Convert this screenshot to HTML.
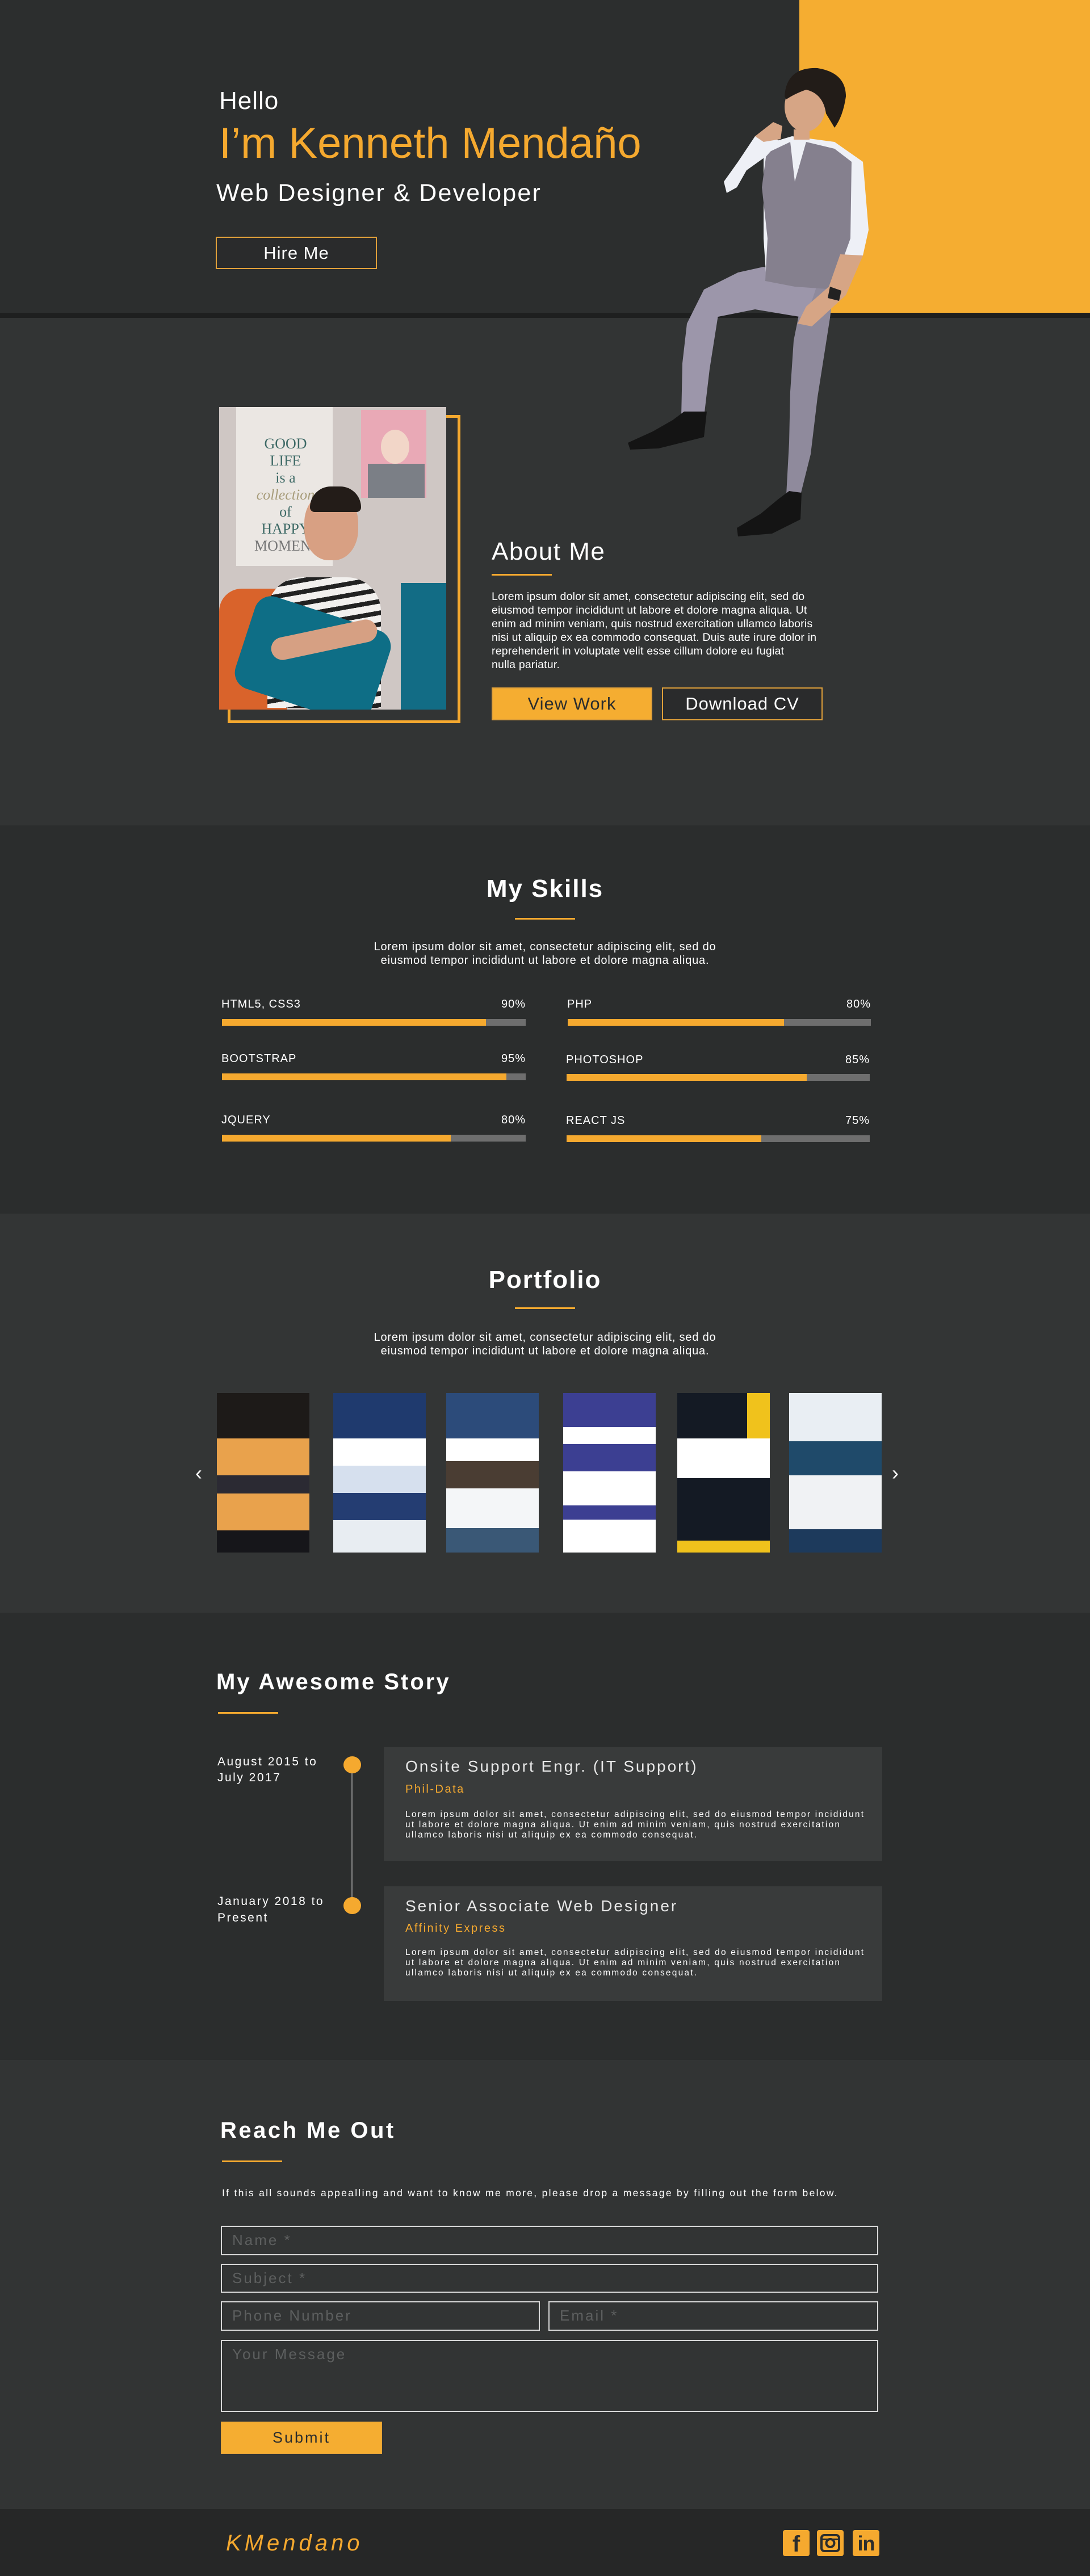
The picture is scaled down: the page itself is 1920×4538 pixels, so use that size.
<!DOCTYPE html>
<html><head><meta charset="utf-8"><style>
*{margin:0;padding:0;box-sizing:border-box}
body{width:1920px;height:4538px;position:relative;font-family:"Liberation Sans",Arial,sans-serif;color:#fff;background:#2b2d2d;overflow:hidden}
.a{position:absolute;white-space:nowrap}
.sec{position:absolute;left:0;width:1920px}
.ul{position:absolute;height:3px;background:#f5a92f}
.lbl{position:absolute;font-size:20px;letter-spacing:1px;line-height:24px}
.bar{position:absolute;height:12px;background:#6e6e6e}
.bar i{display:block;height:100%;background:#f5a92f}
.th{position:absolute;top:2454px;width:163px;height:281px;overflow:hidden;background:#fff}
.th div{width:100%}
.inp{position:absolute;border:2px solid #d8d8d8;color:#5d5f5f;font-size:26px;letter-spacing:3px;padding:6px 18px;line-height:34px}
.card{position:absolute;left:676px;width:878px;background:#393b3b}
.card .t{position:absolute;left:38px;font-size:28px;letter-spacing:3px;color:#e8e8e8}
.card .c{position:absolute;left:38px;font-size:20px;letter-spacing:2.5px;color:#f5a92f}
.card .p{position:absolute;left:38px;font-size:15.5px;line-height:18px;letter-spacing:2.2px;color:#fff}
.ic{position:absolute;top:4457px;width:47px;height:46px;background:#f5a92f;border-radius:4px;color:#2b2d2d;font-weight:bold;text-align:center}
</style></head><body>
<div class="sec" style="top:0;height:551px;background:#2c2e2e"></div>
<div class="a" style="left:1408px;top:0;width:512px;height:551px;background:#f5ad31"></div>
<div class="sec" style="top:551px;height:9px;background:#1e1f1f"></div>
<div class="sec" style="top:560px;height:894px;background:#323434"></div>
<div class="sec" style="top:1454px;height:684px;background:#2b2d2d"></div>
<div class="sec" style="top:2138px;height:703px;background:#333535"></div>
<div class="sec" style="top:2841px;height:788px;background:#2b2d2d"></div>
<div class="sec" style="top:3629px;height:791px;background:#323434"></div>
<div class="sec" style="top:4420px;height:118px;background:#262727"></div>

<div class="a" style="left:386px;top:153px;font-size:44px;line-height:50px;letter-spacing:1px">Hello</div>
<div class="a" style="left:386px;top:210px;font-size:76px;line-height:86px;color:#f5a92f">I’m Kenneth Mendaño</div>
<div class="a" style="left:381px;top:315px;font-size:43px;line-height:50px;letter-spacing:2.2px">Web Designer &amp; Developer</div>
<div class="a" style="left:380px;top:417px;width:284px;height:57px;border:2px solid #e0a03a;background:#2a2b2c;font-size:31px;line-height:53px;text-align:center;letter-spacing:1px">Hire Me</div>

<svg class="a" style="left:0;top:0" width="1920" height="1000" viewBox="0 0 1920 1000">
<polygon points="1420,490 1470,495 1462,560 1440,700 1428,800 1410,872 1385,872 1390,780 1392,690 1398,600" fill="#8f8a9c"/>
<polygon points="1345,470 1440,500 1420,560 1330,545 1255,560 1225,540 1240,510 1300,480" fill="#9c96aa"/>
<polygon points="1225,540 1265,555 1250,650 1240,735 1200,735 1202,640 1210,570" fill="#9c96aa"/>
<polygon points="1205,725 1245,725 1240,770 1160,790 1110,792 1106,780 1150,760 1185,740" fill="#141414"/>
<polygon points="1390,865 1412,868 1410,915 1360,940 1300,945 1298,930 1340,905 1370,880" fill="#141414"/>
<polygon points="1345,255 1395,240 1470,250 1520,285 1530,405 1520,450 1470,455 1460,500 1350,495 1345,420" fill="#eef0f6"/>
<polygon points="1350,270 1392,250 1400,320 1420,250 1470,262 1500,285 1498,420 1480,470 1470,510 1400,505 1348,495 1352,420 1342,330" fill="#85808e"/>
<polygon points="1350,275 1315,300 1298,330 1280,340 1275,320 1300,285 1330,240 1360,232 1372,250" fill="#eef0f6"/>
<polygon points="1330,240 1362,215 1378,222 1375,245 1345,250" fill="#d6a585"/>
<polygon points="1480,448 1520,450 1490,520 1430,575 1405,570 1420,540 1460,505" fill="#d6a585"/>
<polygon points="1462,505 1482,512 1478,530 1458,525" fill="#222"/>
<ellipse cx="1418" cy="188" rx="36" ry="44" fill="#d6a585"/>
<path d="M1382,170 Q1385,118 1440,120 Q1490,128 1490,170 Q1485,205 1470,225 L1455,200 Q1450,165 1420,158 Q1400,165 1385,175 Z" fill="#221c18"/>
<rect x="1398" y="228" width="28" height="18" fill="#d6a585"/>
</svg>

<div class="a" style="left:401px;top:731px;width:410px;height:543px;border:5px solid #f5a92f"></div>
<div class="a" style="left:386px;top:717px;width:400px;height:533px;overflow:hidden;background:#cfc7c4">
  <div class="a" style="left:30px;top:0;width:170px;height:280px;background:#ebe7e3"></div>
  <div class="a" style="left:62px;top:50px;font-size:26px;color:#3e6a66;font-family:'Liberation Serif',serif;line-height:30px;text-align:center;white-space:normal;width:110px">GOOD LIFE<br>is a<br><span style="color:#a79c7a;font-style:italic">collection</span><br>of<br>HAPPY<br><span style="color:#777">MOMENTS</span></div>
  <div class="a" style="left:250px;top:5px;width:115px;height:155px;background:#e9a9b6"></div>
  <div class="a" style="left:285px;top:40px;width:50px;height:60px;border-radius:50%;background:#f2d6c8"></div>
  <div class="a" style="left:262px;top:100px;width:100px;height:60px;background:#7b7f86"></div>
  <div class="a" style="left:0;top:320px;width:120px;height:213px;background:#d9632b;border-radius:40px 0 0 0"></div>
  <div class="a" style="left:85px;top:300px;width:200px;height:230px;border-radius:60px 60px 0 0;background-image:repeating-linear-gradient(170deg,#f2f0ee 0 12px,#222 12px 20px)"></div>
  <div class="a" style="left:150px;top:150px;width:95px;height:120px;border-radius:45%;background:#d8a083"></div>
  <div class="a" style="left:160px;top:140px;width:90px;height:45px;border-radius:45px 45px 10px 10px;background:#231c18"></div>
  <div class="a" style="left:40px;top:360px;width:250px;height:170px;background:#0e6e86;transform:rotate(18deg);border-radius:30px"></div>
  <div class="a" style="left:320px;top:310px;width:80px;height:223px;background:#126c85"></div>
  <div class="a" style="left:90px;top:390px;width:190px;height:40px;background:#d6a083;border-radius:20px;transform:rotate(-12deg)"></div>
</div>

<div class="a" style="left:866px;top:946px;font-size:44px;line-height:52px;letter-spacing:1.5px">About Me</div>
<div class="ul" style="left:866px;top:1011px;width:106px"></div>
<div class="a" style="left:866px;top:1039px;font-size:19.5px;line-height:24px;letter-spacing:0.2px">Lorem ipsum dolor sit amet, consectetur adipiscing elit, sed do<br>eiusmod tempor incididunt ut labore et dolore magna aliqua. Ut<br>enim ad minim veniam, quis nostrud exercitation ullamco laboris<br>nisi ut aliquip ex ea commodo consequat. Duis aute irure dolor in<br>reprehenderit in voluptate velit esse cillum dolore eu fugiat<br>nulla pariatur.</div>
<div class="a" style="left:866px;top:1211px;width:283px;height:58px;background:#f5ad31;border:2px solid #e0a03a;color:#2b2d2d;font-size:31px;line-height:54px;text-align:center;letter-spacing:1px">View Work</div>
<div class="a" style="left:1166px;top:1211px;width:283px;height:58px;border:2px solid #e0a03a;background:#2a2b2c;font-size:31px;line-height:54px;text-align:center;letter-spacing:1px">Download CV</div>

<div class="a" style="left:0;width:1920px;text-align:center;top:1540px;font-size:44px;line-height:52px;letter-spacing:2px;font-weight:bold">My Skills</div>
<div class="ul" style="left:907px;top:1617px;width:106px"></div>
<div class="a" style="left:0;width:1920px;text-align:center;top:1656px;font-size:20px;line-height:24px;letter-spacing:0.8px">Lorem ipsum dolor sit amet, consectetur adipiscing elit, sed do<br>eiusmod tempor incididunt ut labore et dolore magna aliqua.</div>

<div class="lbl" style="left:390px;top:1757px">HTML5, CSS3</div><div class="lbl" style="left:870px;width:56px;text-align:right;top:1757px">90%</div>
<div class="bar" style="left:391px;top:1795px;width:535px"><i style="width:87%"></i></div>
<div class="lbl" style="left:999px;top:1757px">PHP</div><div class="lbl" style="left:1478px;width:56px;text-align:right;top:1757px">80%</div>
<div class="bar" style="left:1000px;top:1795px;width:534px"><i style="width:71.4%"></i></div>
<div class="lbl" style="left:390px;top:1853px">BOOTSTRAP</div><div class="lbl" style="left:870px;width:56px;text-align:right;top:1853px">95%</div>
<div class="bar" style="left:391px;top:1891px;width:535px"><i style="width:93.6%"></i></div>
<div class="lbl" style="left:997px;top:1855px">PHOTOSHOP</div><div class="lbl" style="left:1476px;width:56px;text-align:right;top:1855px">85%</div>
<div class="bar" style="left:998px;top:1892px;width:534px"><i style="width:79.3%"></i></div>
<div class="lbl" style="left:390px;top:1961px">JQUERY</div><div class="lbl" style="left:870px;width:56px;text-align:right;top:1961px">80%</div>
<div class="bar" style="left:391px;top:1999px;width:535px"><i style="width:75.4%"></i></div>
<div class="lbl" style="left:997px;top:1962px">REACT JS</div><div class="lbl" style="left:1476px;width:56px;text-align:right;top:1962px">75%</div>
<div class="bar" style="left:998px;top:2000px;width:534px"><i style="width:64.3%"></i></div>

<div class="a" style="left:0;width:1920px;text-align:center;top:2229px;font-size:44px;line-height:52px;letter-spacing:2px;font-weight:bold">Portfolio</div>
<div class="ul" style="left:907px;top:2303px;width:106px"></div>
<div class="a" style="left:0;width:1920px;text-align:center;top:2344px;font-size:20px;line-height:24px;letter-spacing:0.8px">Lorem ipsum dolor sit amet, consectetur adipiscing elit, sed do<br>eiusmod tempor incididunt ut labore et dolore magna aliqua.</div>
<div class="a" style="left:344px;top:2575px;font-size:36px;line-height:40px">‹</div>
<div class="a" style="left:1571px;top:2575px;font-size:36px;line-height:40px">›</div>

<div class="th" style="left:382px"><div style="height:80px;background:#1d1a18"></div><div style="height:65px;background:#e9a24c"></div><div style="height:32px;background:#2b2a33"></div><div style="height:65px;background:#e9a24c"></div><div style="height:39px;background:#16161a"></div></div>
<div class="th" style="left:587px"><div style="height:80px;background:#1f3a6e"></div><div style="height:48px;background:#fff"></div><div style="height:48px;background:#d6e0ee"></div><div style="height:48px;background:#243d72"></div><div style="height:57px;background:#e8edf2"></div></div>
<div class="th" style="left:786px"><div style="height:80px;background:#2c4b7a"></div><div style="height:40px;background:#fff"></div><div style="height:48px;background:#4a3d33"></div><div style="height:70px;background:#f4f6f8"></div><div style="height:43px;background:#3a5876"></div></div>
<div class="th" style="left:992px"><div style="height:60px;background:#3c3f92"></div><div style="height:30px;background:#fff"></div><div style="height:48px;background:#3c3f92"></div><div style="height:60px;background:#fff"></div><div style="height:25px;background:#3c3f92"></div><div style="height:58px;background:#fff"></div></div>
<div class="th" style="left:1193px"><div style="height:80px;background:#141a24;border-right:40px solid #f0c21c"></div><div style="height:70px;background:#fff"></div><div style="height:110px;background:#141a24"></div><div style="height:21px;background:#f0c21c"></div></div>
<div class="th" style="left:1390px"><div style="height:85px;background:#e9eef3"></div><div style="height:60px;background:#1f4a6a"></div><div style="height:95px;background:#f0f2f4"></div><div style="height:41px;background:#1d3a5c"></div></div>

<div class="a" style="left:381px;top:2939px;font-size:40px;line-height:48px;letter-spacing:3px;font-weight:bold">My Awesome Story</div>
<div class="ul" style="left:384px;top:3016px;width:106px"></div>
<div class="a" style="left:383px;top:3090px;font-size:21px;line-height:28px;letter-spacing:2.5px">August 2015 to<br>July 2017</div>
<div class="a" style="left:383px;top:3335px;font-size:21px;line-height:29px;letter-spacing:2.5px">January 2018 to<br>Present</div>
<div class="a" style="left:619px;top:3109px;width:2px;height:248px;background:#888"></div>
<div class="a" style="left:605px;top:3094px;width:31px;height:30px;border-radius:50%;background:#f5a92f"></div>
<div class="a" style="left:605px;top:3342px;width:31px;height:30px;border-radius:50%;background:#f5a92f"></div>

<div class="card" style="top:3078px;height:200px">
 <div class="t" style="top:18px">Onsite Support Engr. (IT Support)</div>
 <div class="c" style="top:63px">Phil-Data</div>
 <div class="p" style="top:110px">Lorem ipsum dolor sit amet, consectetur adipiscing elit, sed do eiusmod tempor incididunt<br>ut labore et dolore magna aliqua. Ut enim ad minim veniam, quis nostrud exercitation<br>ullamco laboris nisi ut aliquip ex ea commodo consequat.</div>
</div>
<div class="card" style="top:3323px;height:202px">
 <div class="t" style="top:19px">Senior Associate Web Designer</div>
 <div class="c" style="top:63px">Affinity Express</div>
 <div class="p" style="top:108px">Lorem ipsum dolor sit amet, consectetur adipiscing elit, sed do eiusmod tempor incididunt<br>ut labore et dolore magna aliqua. Ut enim ad minim veniam, quis nostrud exercitation<br>ullamco laboris nisi ut aliquip ex ea commodo consequat.</div>
</div>

<div class="a" style="left:388px;top:3729px;font-size:40px;line-height:48px;letter-spacing:3.5px;font-weight:bold">Reach Me Out</div>
<div class="ul" style="left:391px;top:3806px;width:106px"></div>
<div class="a" style="left:391px;top:3851px;font-size:17.5px;line-height:24px;letter-spacing:2.3px">If this all sounds appealling and want to know me more, please drop a message by filling out the form below.</div>
<div class="inp" style="left:389px;top:3921px;width:1158px;height:52px">Name *</div>
<div class="inp" style="left:389px;top:3988px;width:1158px;height:51px">Subject *</div>
<div class="inp" style="left:389px;top:4054px;width:562px;height:52px">Phone Number</div>
<div class="inp" style="left:966px;top:4054px;width:581px;height:52px">Email *</div>
<div class="inp" style="left:389px;top:4122px;width:1158px;height:127px">Your Message</div>
<div class="a" style="left:389px;top:4266px;width:284px;height:57px;background:#f5ad31;border:1px solid #e0a03a;color:#2b2d2d;font-size:27px;line-height:55px;text-align:center;letter-spacing:3px">Submit</div>

<div class="a" style="left:398px;top:4456px;font-size:40px;line-height:48px;font-style:italic;color:#f5a92f;letter-spacing:6px">KMendano</div>
<div class="ic" style="left:1379px;font-size:40px;line-height:50px">f</div>
<div class="ic" style="left:1439px">
 <svg width="47" height="46" viewBox="0 0 47 46"><rect x="8" y="9" width="31" height="28" rx="5" fill="none" stroke="#2b2d2d" stroke-width="4"/><circle cx="23.5" cy="23" r="7" fill="none" stroke="#2b2d2d" stroke-width="4"/><rect x="9" y="15" width="29" height="3" fill="#2b2d2d"/></svg>
</div>
<div class="ic" style="left:1502px;font-size:36px;line-height:48px;letter-spacing:-1px">in</div>
</body></html>
